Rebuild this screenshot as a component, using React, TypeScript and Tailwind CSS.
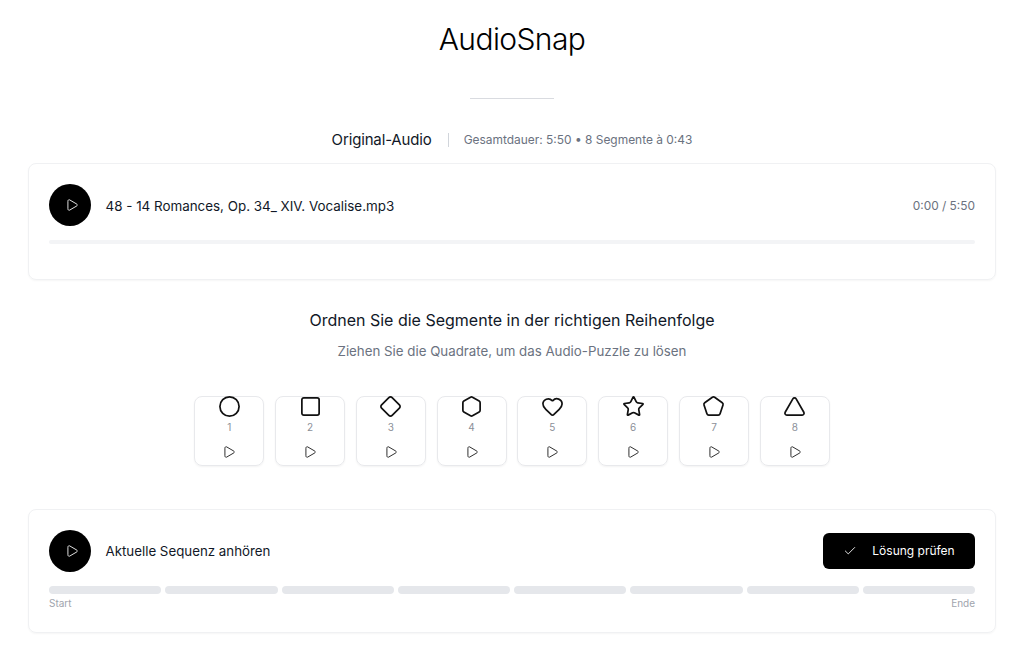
import React from 'react';
import { Check, Circle, Diamond, Heart, Hexagon, Pentagon, Play, Square, Star, Triangle } from 'lucide-react';

const shapes = [Circle, Square, Diamond, Hexagon, Heart, Star, Pentagon, Triangle];

const PlayButton: React.FC = () => (
  <button className="flex h-[42px] w-[42px] shrink-0 items-center justify-center rounded-full bg-black text-white">
    <Play size={14} strokeWidth={1.5} className="ml-[3px]" />
  </button>
);

export default function App() {
  return (
    <div className="min-h-[653px] bg-white font-['Inter',sans-serif] text-[#111827]">
      <div className="px-7 pt-[19px]">
        <h1 className="text-center text-[30px] leading-[40px] font-light tracking-[-0.02em] text-black">AudioSnap</h1>
        <div className="mx-auto mt-[39px] h-px w-[84px] bg-[#d9dbe0]" />

        <div className="mt-[31px] flex h-5 items-center justify-center">
          <h2 className="text-[15px] font-normal tracking-[-0.01em]">Original-Audio</h2>
          <span className="mr-[15px] ml-[16px] h-[14px] w-px bg-[#d1d5db]" />
          <span className="text-[11.95px] font-normal text-[#6b7280]">Gesamtdauer: 5:50 • 8 Segmente à 0:43</span>
        </div>

        <section className="mt-[13px] h-[117px] rounded-lg border border-[#f0f1f3] px-5 pt-5 shadow-[0_1px_2px_rgba(0,0,0,0.04)]">
          <div className="flex items-center">
            <PlayButton />
            <span className="ml-[14.5px] translate-y-px text-[13.4px] font-normal">48 - 14 Romances, Op. 34_ XIV. Vocalise.mp3</span>
            <span className="ml-auto translate-y-px text-[11.9px] font-normal text-[#6b7280]">0:00 / 5:50</span>
          </div>
          <div className="mt-[14px] h-1 rounded-full bg-[#f3f4f6]" />
        </section>

        <h2 className="mt-[28px] text-center text-[16px] leading-[24px] font-normal">Ordnen Sie die Segmente in der richtigen Reihenfolge</h2>
        <p className="mt-[9px] text-center text-[13.3px] leading-[20px] font-normal text-[#6b7280]">Ziehen Sie die Quadrate, um das Audio-Puzzle zu lösen</p>

        <div className="mt-[35px] flex justify-center gap-[10.8px]">
          {shapes.map((Shape, i) => (
            <div key={i} className="flex h-[70px] w-[70px] flex-col items-center rounded-lg border border-[#e8e9ec] shadow-[0_1px_2px_rgba(0,0,0,0.05)]">
              <Shape size={23} strokeWidth={1.8} className="-mt-[2px] text-[#111111]" />
              <span className="mt-[2px] text-[10px] leading-[14px] font-normal text-[#8b8f98]">{i + 1}</span>
              <Play size={14} strokeWidth={1.5} className="mt-[11px] text-[#111111]" />
            </div>
          ))}
        </div>

        <section className="mt-[43px] h-[124px] rounded-lg border border-[#f0f1f3] px-5 pt-5 shadow-[0_1px_2px_rgba(0,0,0,0.04)]">
          <div className="flex items-center">
            <PlayButton />
            <span className="ml-[14.5px] translate-y-px text-[13.3px] font-normal">Aktuelle Sequenz anhören</span>
            <button className="ml-auto flex h-9 w-[152px] items-center justify-center gap-[15px] rounded-md bg-black text-[12px] font-normal text-white">
              <Check size={14} strokeWidth={1.5} />
              Lösung prüfen
            </button>
          </div>
          <div className="mt-[14px] flex gap-1">
            {shapes.map((_, i) => (
              <div key={i} className="h-[8px] flex-1 rounded-full bg-[#e5e7eb]" />
            ))}
          </div>
          <div className="mt-[2px] flex justify-between text-[10px] leading-[14px] font-normal text-[#a0a4ad]">
            <span>Start</span>
            <span>Ende</span>
          </div>
        </section>
      </div>
    </div>
  );
}
